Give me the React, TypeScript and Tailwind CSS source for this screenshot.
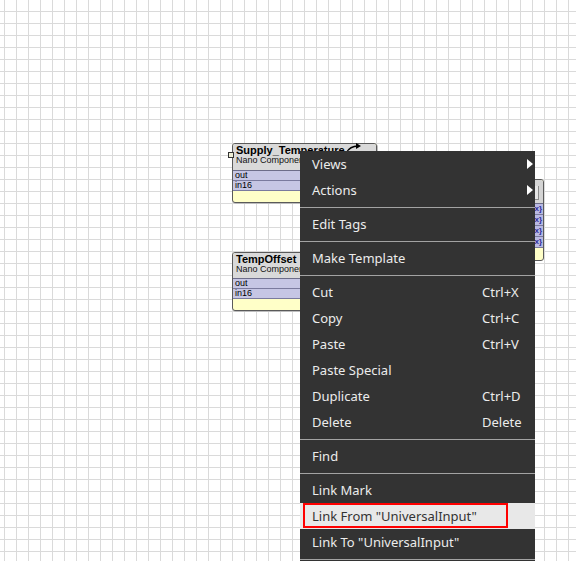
import React from 'react';

type Row = { label: string };

const nodeFont = { fontFamily: '"Liberation Sans", Arial, sans-serif' };

const WireNode = ({
  left,
  top,
  width,
  title,
  rows,
  headerH,
}: {
  left: number;
  top: number;
  width: number;
  title: string;
  rows: Row[];
  headerH: string;
}) => {
  return (
    <div
      className="absolute rounded-[3px] border border-[#5a5a5a] bg-[#ffffc8] overflow-hidden shadow-[1px_1px_0_#bdbdbd]"
      style={{ left, top, width, ...nodeFont }}
    >
      <div className={`${headerH} bg-[#d9d9d9] border-b border-[#6d6d8a] px-[3px] pt-[1px] leading-none`}>
        <div className="text-[11px] font-bold text-black leading-[10px] whitespace-nowrap">{title}</div>
        <div className="text-[9px] text-[#111] leading-[10px] whitespace-nowrap">Nano Component</div>
      </div>
      {rows.map((r) => (
        <div
          key={r.label}
          className="h-[10px] bg-[#c6c6e4] border-b border-[#7a7a9e] px-[2px] text-[9px] leading-[9px] text-black"
        >
          {r.label}
        </div>
      ))}
      <div className="h-[11px]" />
    </div>
  );
};

type Item =
  | { kind: 'item'; label: string; shortcut?: string; submenu?: boolean; active?: boolean }
  | { kind: 'sep' };

const items: Item[] = [
  { kind: 'item', label: 'Views', submenu: true },
  { kind: 'item', label: 'Actions', submenu: true },
  { kind: 'sep' },
  { kind: 'item', label: 'Edit Tags' },
  { kind: 'sep' },
  { kind: 'item', label: 'Make Template' },
  { kind: 'sep' },
  { kind: 'item', label: 'Cut', shortcut: 'Ctrl+X' },
  { kind: 'item', label: 'Copy', shortcut: 'Ctrl+C' },
  { kind: 'item', label: 'Paste', shortcut: 'Ctrl+V' },
  { kind: 'item', label: 'Paste Special' },
  { kind: 'item', label: 'Duplicate', shortcut: 'Ctrl+D' },
  { kind: 'item', label: 'Delete', shortcut: 'Delete' },
  { kind: 'sep' },
  { kind: 'item', label: 'Find' },
  { kind: 'sep' },
  { kind: 'item', label: 'Link Mark' },
  { kind: 'item', label: 'Link From "UniversalInput"', active: true },
  { kind: 'item', label: 'Link To "UniversalInput"' },
  { kind: 'sep' },
];

const ContextMenu = () => {
  return (
    <div
      className="absolute left-[300px] top-[151px] w-[235px] pb-[20px] bg-[#333333] text-[13px] text-[#ececec]"
      style={{ fontFamily: '"Noto Sans", "Open Sans", sans-serif' }}
    >
      {items.map((it, i) =>
        it.kind === 'sep' ? (
          <div key={i} className="h-[8px] flex items-center">
            <div className="h-px w-full bg-[#a3a3a3]" />
          </div>
        ) : (
          <div
            key={i}
            className={`relative h-[26px] flex items-center pl-[12px] pt-[2px] ${
              it.active ? 'bg-[#e8e8e8] text-[#333333]' : ''
            }`}
          >
            <span className="flex-1 whitespace-nowrap">{it.label}</span>
            {it.shortcut && <span className="w-[53px] whitespace-nowrap">{it.shortcut}</span>}
            {it.submenu && (
              <svg className="absolute right-[2px] top-[8px]" width="6" height="10" viewBox="0 0 6 10">
                <path d="M0 0 L6 5 L0 10 Z" fill="#ffffff" />
              </svg>
            )}
            {it.active && (
              <div className="absolute left-[3px] top-0 w-[205px] h-[25px] border-2 border-[#ff0000]" />
            )}
          </div>
        )
      )}
    </div>
  );
};

export default function App() {
  return (
    <div className="relative w-[576px] h-[561px] overflow-hidden bg-white bg-[linear-gradient(to_right,#dadada_1px,transparent_1px),linear-gradient(to_bottom,#dadada_1px,transparent_1px)] bg-[size:12px_12px] bg-[position:4px_11px]">
      {/* right node, mostly under the menu */}
      <div
        className="absolute left-[420px] top-[179px] w-[124px] rounded-[3px] border border-[#5a5a5a] bg-[#ffffc8] overflow-hidden"
        style={nodeFont}
      >
        <div className="relative h-[24px] bg-[#d4d4d4] border-b border-[#6d6d8a]">
          <div className="absolute right-[4px] top-[6px] w-[5px] h-[14px] border-r border-b border-[#8a8a8a] bg-[#e4e4e4]" />
        </div>
        {[0, 1, 2, 3].map((n) => (
          <div key={n} className="relative h-[11px] bg-[#b9b9e2] border-b border-[#7a7a9e]">
            <span className="absolute right-[1px] top-[1px] text-[8px] leading-[8px] font-bold text-[#2c2c9a]">{'{x}'}</span>
          </div>
        ))}
        <div className="h-[12px]" />
      </div>

      <WireNode
        left={232}
        top={143}
        width={145}
        title="Supply_Temperature"
        headerH="h-[27px]"
        rows={[{ label: 'out' }, { label: 'in16' }]}
      />
      {/* link handle + icon on first node */}
      <div className="absolute left-[228px] top-[152px] w-[6px] h-[6px] border border-[#333] bg-[#eeeed6]" />
      <svg className="absolute left-[344px] top-[143px]" width="20" height="11" viewBox="0 0 20 11">
        <path d="M2 10 Q6 3 14 3" stroke="#000" strokeWidth="1.3" fill="none" />
        <path d="M12 0 L17 3 L12 6 Z" fill="#000" />
      </svg>

      <WireNode
        left={232}
        top={252}
        width={145}
        title="TempOffset"
        headerH="h-[26px]"
        rows={[{ label: 'out' }, { label: 'in16' }]}
      />

      <ContextMenu />
    </div>
  );
}
